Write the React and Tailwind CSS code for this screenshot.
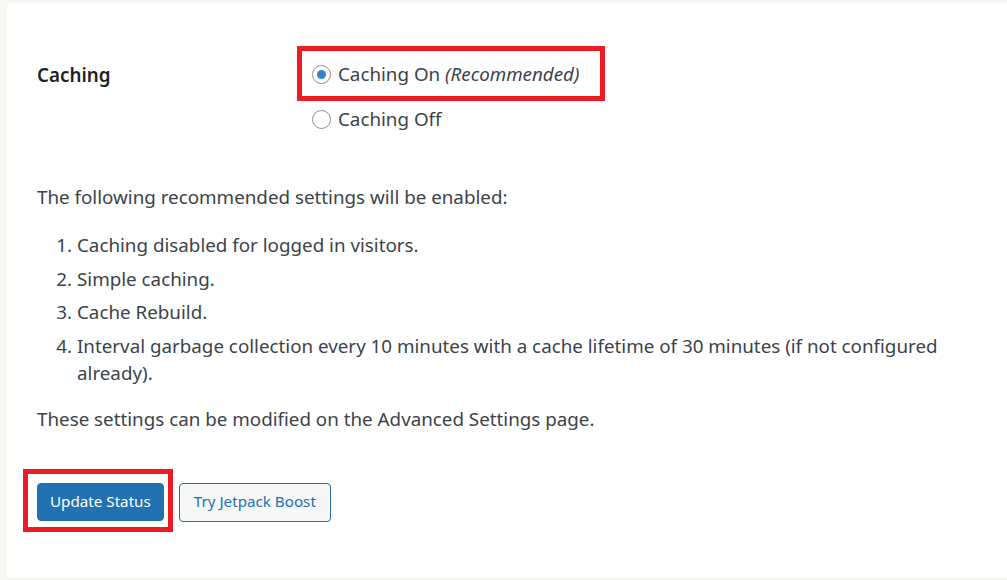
import React from 'react';

const font = { fontFamily: '"Noto Sans", "Open Sans", sans-serif' };

function Radio({ checked }) {
    return (
        <span className="inline-flex w-[19px] h-[19px] rounded-full border border-[#8c8f94] bg-white items-center justify-center shrink-0">
            {checked && <span className="w-[9px] h-[9px] rounded-full bg-[#3582c4]" />}
        </span>
    );
}

function Annotation({ className }) {
    return <span className={`pointer-events-none absolute border-[5px] border-[#ed1c24] ${className}`} />;
}

export default function App() {
    return (
        <div className="w-[1007px] h-[580px] bg-[#f7f7f3] pt-[3px] pl-[7px] overflow-hidden" style={font}>
            <div className="h-[574px] bg-white rounded-tl-[3px] rounded-bl-[3px] pl-[30px] pr-[40px] text-[18.8px] leading-[27px] text-[#3c434a]">
                {/* caching row */}
                <div className="flex pt-[58px]">
                    <div className="w-[275px] shrink-0 font-semibold text-[#1d2327] pt-[1px]">Caching</div>
                    <div className="flex flex-col gap-[18px]">
                        <label className="relative flex items-center gap-[7px]">
                            <Annotation className="-left-[15px] -right-[26px] -top-[15px] -bottom-[13px]" />
                            <Radio checked />
                            <span>
                                Caching On <em>(Recommended)</em>
                            </span>
                        </label>
                        <label className="flex items-center gap-[7px]">
                            <Radio />
                            <span>Caching Off</span>
                        </label>
                    </div>
                </div>

                <p className="mt-[51px]">The following recommended settings will be enabled:</p>

                <ol className="list-decimal pl-[40px] mt-[21px]">
                    <li className="mb-[6.5px]">Caching disabled for logged in visitors.</li>
                    <li className="mb-[6.5px]">Simple caching.</li>
                    <li className="mb-[6.5px]">Cache Rebuild.</li>
                    <li>
                        Interval garbage collection every 10 minutes with a cache lifetime of 30 minutes (if not configured
                        already).
                    </li>
                </ol>

                <p className="mt-[19px]">These settings can be modified on the Advanced Settings page.</p>

                <div className="flex gap-[15px] mt-[50px]">
                    <div className="relative">
                        <Annotation className="-left-[14px] -right-[9px] -top-[14px] -bottom-[10px]" />
                        <button className="h-[38px] px-[12px] rounded-[4px] bg-[#2271b1] border border-[#2271b1] text-white text-[15.2px] leading-none">
                            Update Status
                        </button>
                    </div>
                    <button className="h-[39px] px-[14px] rounded-[4px] bg-[#f6f7f7] border border-[#2271b1] text-[#2271b1] text-[15.2px] leading-none">
                        Try Jetpack Boost
                    </button>
                </div>
            </div>
        </div>
    );
}
